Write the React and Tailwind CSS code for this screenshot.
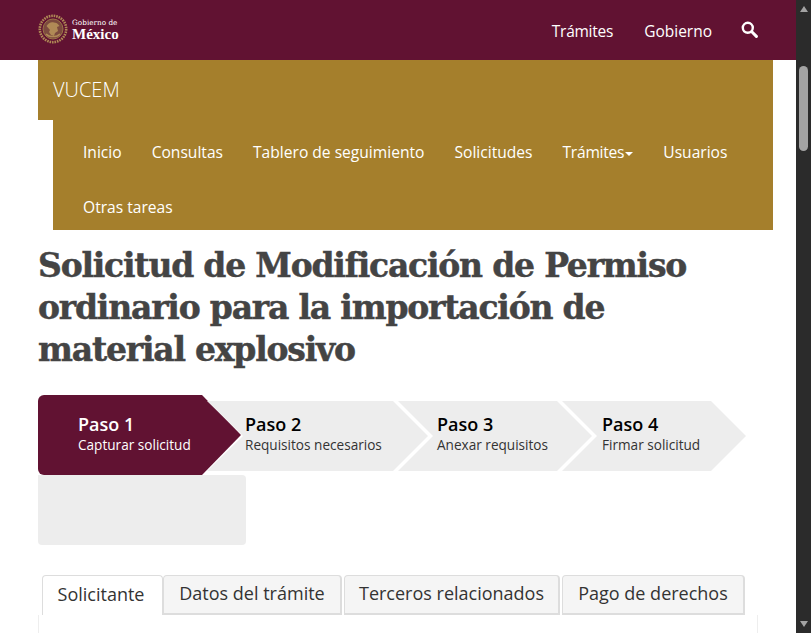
import React from "react";

const navItems = ["Inicio", "Consultas", "Tablero de seguimiento", "Solicitudes", "Trámites", "Usuarios", "Otras tareas"];

const Emblem = () => (
  <svg width="30" height="30" viewBox="0 0 30 30" fill="none">
    <circle cx="15" cy="15" r="10" fill="#7c4a3e" />
    <circle cx="15" cy="15" r="13.2" stroke="#b08a56" strokeWidth="2.6" strokeDasharray="1.6 0.9" />
    <circle cx="15" cy="15" r="10" stroke="#9b7448" strokeWidth="1" />
    <path d="M8.5 12c2-3.5 5-4.5 7.5-3.5 2 0 4 1 5.5 3.5l-2.5 1 1 4-3 2-1 3-3-1-2-3 1-2-3.5-4z" fill="#b08a56" />
    <path d="M8 20c3 3.5 11 3.5 14 0" stroke="#b08a56" strokeWidth="1.4" />
  </svg>
);

const Step = ({ title, text, className, active }) => (
  <div className={className}>
    <div className={active ? "text-white text-[18px] leading-[24px] font-semibold" : "text-black text-[18px] leading-[24px] font-semibold"}>{title}</div>
    <div className={active ? "text-white text-[13.6px] leading-[18px]" : "text-[#333] text-[13.6px] leading-[18px]"}>{text}</div>
  </div>
);

const Tab = ({ label, className }) => (
  <div className={"h-10 flex items-center justify-center pb-[2px] text-[18px] text-[#333] rounded-t " + className}>{label}</div>
);

export default function App() {
  return (
    <div className="flex h-screen overflow-hidden bg-white font-['Open_Sans',sans-serif]">
      <div className="w-[796px] shrink-0">
        <header className="h-[60px] bg-[#611232] flex items-center justify-between pl-[38px] pr-[38px]">
          <div className="flex items-center gap-1 pb-[2px]">
            <Emblem />
            <div className="text-white pt-[1px]">
              <div className="font-['DejaVu_Serif',serif] text-[7.3px] leading-[9px]">Gobierno de</div>
              <div className="font-['Liberation_Serif',serif] text-[15px] leading-[14px] font-bold">México</div>
            </div>
          </div>
          <div className="flex items-center text-white text-[15.5px] pt-[3px]">
            <span className="mr-[31px] tracking-[-0.25px]">Trámites</span>
            <span className="mr-[29px]">Gobierno</span>
            <svg width="17" height="17" viewBox="0 0 17 17" fill="none" className="mb-[4px]">
              <circle cx="6.8" cy="6.8" r="5" stroke="white" strokeWidth="2.4" />
              <path d="M10.8 10.8l4.6 4.6" stroke="white" strokeWidth="3" strokeLinecap="round" />
            </svg>
          </div>
        </header>

        <div className="mx-[38px] mr-[23px]">
          <div className="h-[60px] bg-[#a57f2c] flex items-center pl-[15px] pb-[1px] text-white text-[20px] font-light">VUCEM</div>
          <nav className="ml-[15px] h-[110px] bg-[#a57f2c] pl-[15px] pt-[5px] flex flex-wrap content-start text-white text-[15.6px]">
            {navItems.map((item) => (
              <a key={item} className="h-[55px] px-[15px] flex items-center">
                {item === "Trámites" ? <span className="tracking-[-0.25px]">{item}</span> : item}
                {item === "Trámites" && <span className="ml-[1px] mt-[3px] border-x-[4px] border-t-[4px] border-x-transparent border-t-white" />}
              </a>
            ))}
          </nav>
        </div>

        <div className="pl-[38px] pr-[23px]">
          <h1 className="mt-[15px] max-w-[690px] font-['DejaVu_Serif',serif] font-bold text-[#444] text-[33px] tracking-[-1.2px] leading-[42px] [-webkit-text-stroke:0.5px_#444]">
            Solicitud de Modificación de Permiso ordinario para la importación de material explosivo
          </h1>

          <div className="mt-[24px] flex items-center">
            <Step
              active
              title="Paso 1"
              text="Capturar solicitud"
              className="w-[203px] h-20 shrink-0 pl-10 pt-[17px] bg-[#611232] rounded-l-md [clip-path:polygon(0_0,164px_0,100%_50%,164px_100%,0_100%)]"
            />
            <Step
              title="Paso 2"
              text="Requisitos necesarios"
              className="w-[221px] h-[70px] mt-[2px] shrink-0 -ml-[34px] pl-[38px] pt-[11px] bg-[#ededed] [clip-path:polygon(0_0,186px_0,100%_50%,186px_100%,0_100%,36px_50%)]"
            />
            <Step
              title="Paso 3"
              text="Anexar requisitos"
              className="w-[194px] h-[70px] mt-[2px] shrink-0 -ml-[30px] pl-[39px] pt-[11px] bg-[#ededed] [clip-path:polygon(0_0,159px_0,100%_50%,159px_100%,0_100%,35px_50%)]"
            />
            <Step
              title="Paso 4"
              text="Firmar solicitud"
              className="w-[184px] h-[70px] mt-[2px] shrink-0 -ml-[30px] pl-10 pt-[11px] bg-[#ededed] [clip-path:polygon(0_0,149px_0,100%_50%,149px_100%,0_100%,35px_50%)]"
            />
          </div>
          <div className="w-[208px] h-[70px] bg-[#ededed] rounded-b rounded-tr" />

          <div className="mt-[30px] pl-1 flex">
            <Tab label="Solicitante" className="w-[121px] bg-white border border-b-0 border-[#ddd] pr-[3px]" />
            <Tab label="Datos del trámite" className="w-[179px] bg-[#f5f5f5] border border-[#ddd] border-b-2 border-r-2" />
            <Tab label="Terceros relacionados" className="w-[216px] ml-[2px] bg-[#f5f5f5] border border-[#ddd] border-b-2 border-r-2" />
            <Tab label="Pago de derechos" className="w-[183px] ml-[2px] bg-[#f5f5f5] border border-[#ddd] border-b-2 border-r-2" />
          </div>
          <div className="h-5 w-[720px] bg-white border-l border-r border-[#eee]" />
        </div>
      </div>

      <div className="w-[15px] shrink-0 bg-[#2b2b2b] flex flex-col items-center h-[633px]">
        <span className="mt-[6px] border-x-[4.5px] border-b-[6px] border-x-transparent border-b-[#a3a3a3]" />
        <span className="mt-[54px] w-[9px] h-[85px] rounded-full bg-[#a3a3a3]" />
        <span className="mt-auto mb-[6px] border-x-[4.5px] border-t-[6px] border-x-transparent border-t-[#a3a3a3]" />
      </div>
    </div>
  );
}
